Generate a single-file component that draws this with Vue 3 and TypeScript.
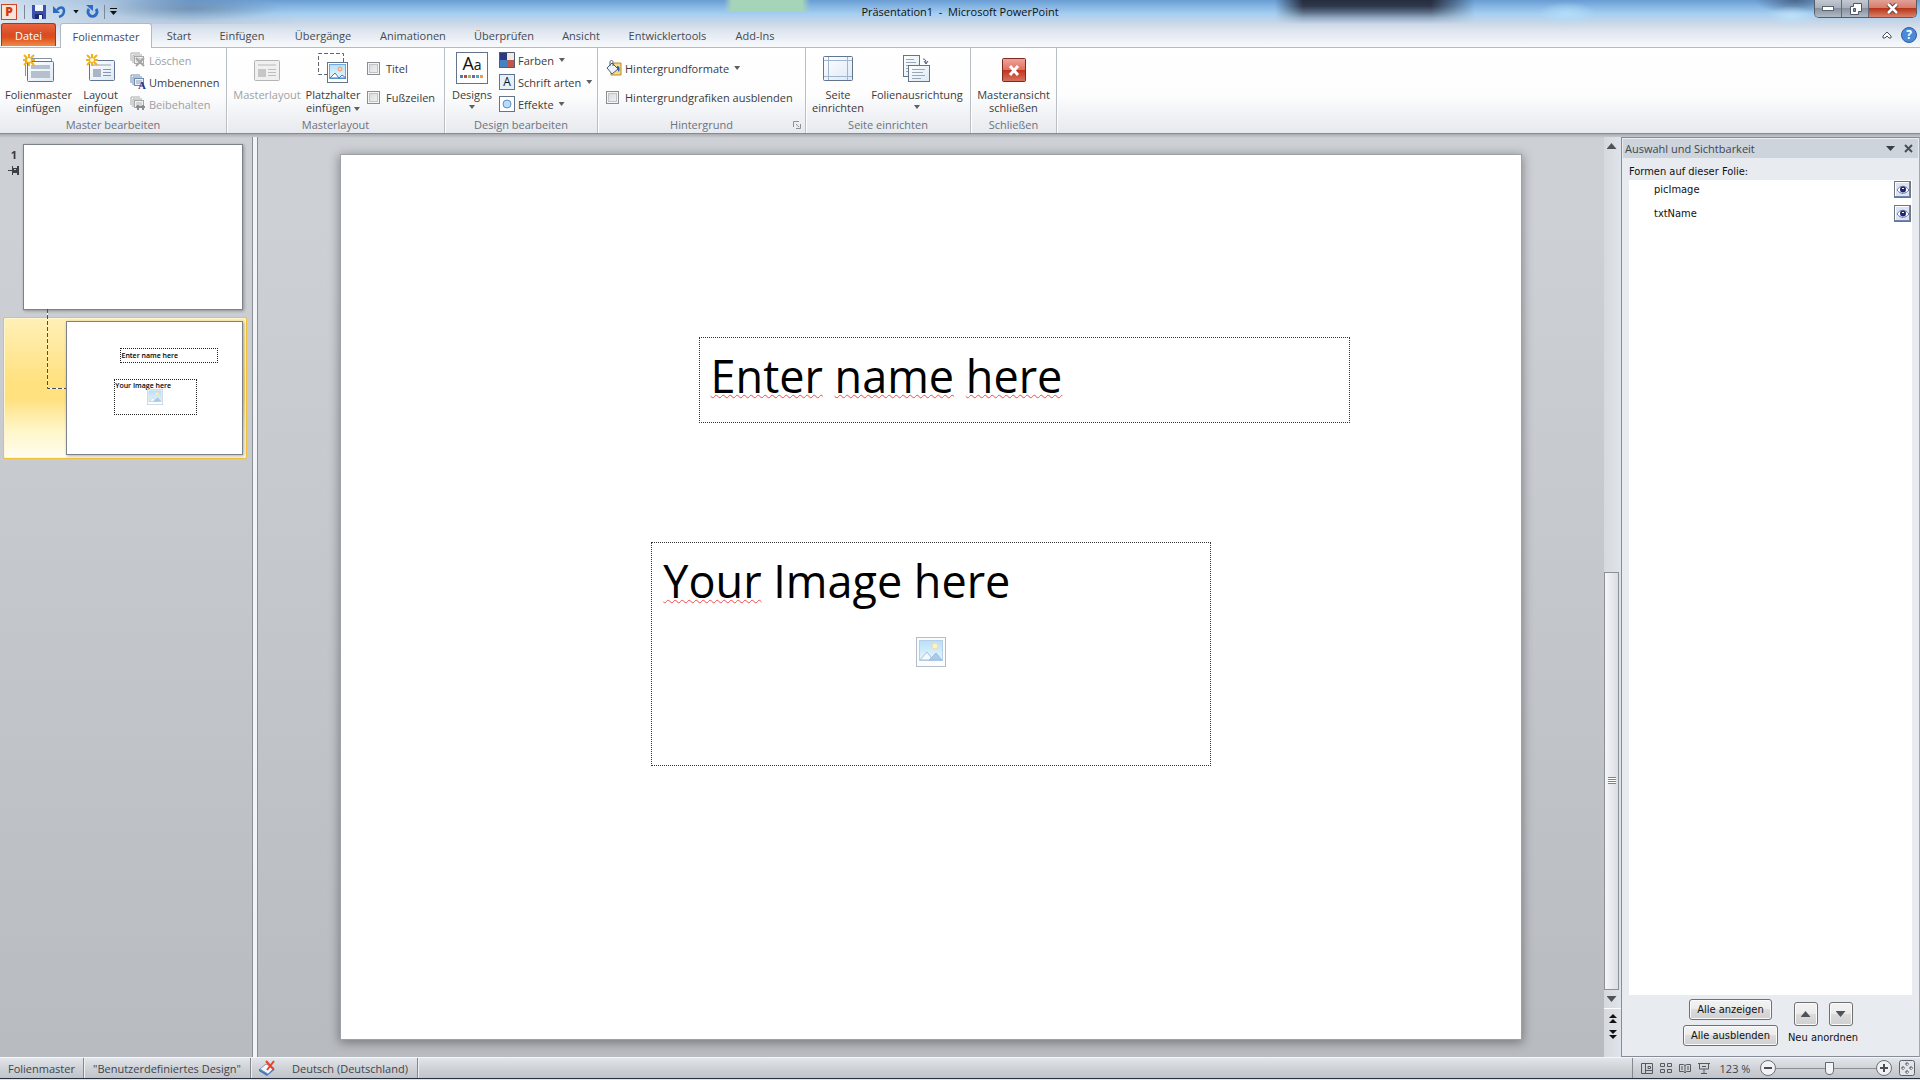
<script setup lang="ts">
import { ref } from 'vue'

interface Shape {
  name: string
  visible: boolean
}

const tabs: string[] = [
  'Start',
  'Einfügen',
  'Übergänge',
  'Animationen',
  'Überprüfen',
  'Ansicht',
  'Entwicklertools',
  'Add-Ins',
]
const shapes = ref<Shape[]>([
  { name: 'picImage', visible: true },
  { name: 'txtName', visible: true },
])
const showTitle = ref(false)
const showFooters = ref(false)
const hideGraphics = ref(false)
const zoom = ref(123)

function setAll(visible: boolean) {
  shapes.value.forEach((s) => (s.visible = visible))
}
function reorder() {
  shapes.value.reverse()
}
</script>

<template>
  <div class="app">
    <svg class="defs" width="0" height="0" aria-hidden="true">
      <defs>
        <linearGradient id="paper" x1="0" y1="0" x2="1" y2="1">
          <stop offset="0" stop-color="#ffffff" />
          <stop offset="1" stop-color="#dce9f5" />
        </linearGradient>
        <linearGradient id="sky" x1="0" y1="0" x2="0" y2="1">
          <stop offset="0" stop-color="#b8e0f8" />
          <stop offset="1" stop-color="#e8f6fd" />
        </linearGradient>
        <linearGradient id="red" x1="0" y1="0" x2="0" y2="1">
          <stop offset="0" stop-color="#f0a59b" />
          <stop offset="0.5" stop-color="#df6f60" />
          <stop offset="0.5" stop-color="#c4301a" />
          <stop offset="1" stop-color="#d87463" />
        </linearGradient>
        <symbol id="spark" viewBox="0 0 12 12">
          <path d="M6 0v12M0 6h12M1 1l10 10M11 1L1 11" stroke="#f2b01e" stroke-width="2" />
          <circle cx="6" cy="6" r="2" fill="#fffbe0" />
        </symbol>
        <symbol id="slides" viewBox="0 0 15 15">
          <path d="M1 9V1h9M3 11V3h9" fill="none" stroke="currentColor" />
          <rect x="4.500" y="4.500" width="9" height="7" fill="#eef1f5" stroke="currentColor" />
          <path d="M6 6h6v4H6z" fill="currentColor" opacity="0.4" />
        </symbol>
        <symbol id="picture" viewBox="0 0 30 30">
          <rect x="0.500" y="0.500" width="29" height="29" fill="#fbfcfe" stroke="#b4bcc8" />
          <rect x="3.500" y="3.500" width="23" height="20" fill="url(#sky)" stroke="#b5cfe8" />
          <circle cx="19" cy="9" r="3" fill="#fdf0cc" stroke="#f1dba4" />
          <path d="M4 23l7-8 6 8z" fill="#f4f9fd" stroke="#a9c3de" />
          <path d="M13 23l7-7 6 7z" fill="#a8cbe8" stroke="#9fbedb" />
        </symbol>
      </defs>
    </svg>

    <header class="chrome">
      <div class="titlebar">
        <div class="quick">
          <span class="logo">P</span>
          <i class="qsep"></i>
          <button class="bare" aria-label="Speichern">
            <svg width="14" height="14" viewBox="0 0 14 14">
              <path d="M0 0h14v14H1L0 13z" fill="#3a4fae" />
              <path d="M3 0h8v6H3z" fill="#eef3fc" />
              <path d="M3 9h8v5H3z" fill="#1d2a6c" />
              <path d="M7 10h3v4H7z" fill="#f4f6fb" />
            </svg>
          </button>
          <button class="bare" aria-label="Rückgängig">
            <svg width="13" height="13" viewBox="0 0 13 13">
              <path d="M4 5c3-4 7-3 7 1 0 3-2 5-5 6" fill="none" stroke="#2a6cc2" stroke-width="2.500" />
              <path d="M0 1v7h7z" fill="#2a6cc2" />
            </svg>
          </button>
          <i class="tri dark"></i>
          <button class="bare" aria-label="Wiederholen">
            <svg width="13" height="13" viewBox="0 0 13 13">
              <path d="M3 4a4.500 4.500 0 1 0 7 0" fill="none" stroke="#2a6cc2" stroke-width="3" />
              <path d="M0 0h7v6z" fill="#2a6cc2" />
            </svg>
          </button>
          <i class="qsep"></i>
          <button class="bare" aria-label="Symbolleiste anpassen">
            <svg width="7" height="7" viewBox="0 0 7 7"><path d="M0 0h7v1H0zM0 3h7L3.500 7z" fill="#111" /></svg>
          </button>
        </div>
        <h1 class="title">Präsentation1&nbsp; -&nbsp; Microsoft PowerPoint</h1>
        <div class="winbtns">
          <button aria-label="Minimieren">
            <svg width="12" height="6"><rect x="0.500" y="0.500" width="11" height="4" fill="#fff" stroke="#5c6470" /></svg>
          </button>
          <button aria-label="Wiederherstellen">
            <svg width="13" height="13">
              <path d="M4.500 1.500h8v8h-3v3h-8v-8h3z" fill="#fff" stroke="#4f5866" />
              <path d="M4.500 6.500h2v3h-2z" fill="#8b95a3" stroke="#4f5866" />
            </svg>
          </button>
          <button class="close" aria-label="Schließen">
            <svg width="13" height="11" viewBox="0 0 13 11">
              <path d="M2 1l9 9M11 1L2 10" stroke="#5d4444" stroke-width="4.500" />
              <path d="M2 1l9 9M11 1L2 10" stroke="#fff" stroke-width="2.500" />
            </svg>
          </button>
        </div>
      </div>
      <nav class="tabs">
        <button class="file">Datei</button>
        <button class="tab active">Folienmaster</button>
        <button v-for="t in tabs" :key="t" class="tab">{{ t }}</button>
        <div class="tabtools">
          <button class="bare" aria-label="Menüband minimieren">
            <svg width="10" height="8" viewBox="0 0 10 8">
              <path d="M1 5l4-4 4 4v2H7L5 5 3 7H1z" fill="#fff" stroke="#46505e" />
            </svg>
          </button>
          <button class="help" aria-label="Hilfe">?</button>
        </div>
      </nav>
    </header>

    <section class="ribbon">
      <div class="group g1">
        <div class="controls">
          <button class="big">
            <span class="pic">
              <svg width="32" height="30" viewBox="0 0 32 30">
                <path d="M2.500 23V5.500h26V8" fill="none" stroke="#8593a8" />
                <rect x="4.500" y="8.500" width="26" height="20" rx="1" fill="url(#paper)" stroke="#62748e" />
                <path d="M8 12h19v4H8zM8 18h19v7H8z" fill="#b5bfce" />
                <use href="#spark" x="0" y="1" width="12" height="12" />
              </svg>
            </span>
            Folienmaster<br />einfügen
          </button>
          <button class="big">
            <span class="pic">
              <svg width="32" height="30" viewBox="0 0 32 30">
                <rect x="4.500" y="7.500" width="25" height="20" rx="1" fill="url(#paper)" stroke="#62748e" />
                <path d="M8 11h18v2H8z" fill="#c3cbd6" />
                <path d="M8 16h8v8H8z" fill="#a9b5c5" />
                <path d="M18 16.500h8M18 19.500h8M18 22.500h8" stroke="#8796ab" />
                <use href="#spark" x="1" y="1" width="12" height="12" />
              </svg>
            </span>
            Layout<br />einfügen
          </button>
          <div class="rows">
            <button class="small" disabled>
              <span class="ico"><svg width="15" height="15" viewBox="0 0 15 15"><use href="#slides" /><path d="M6 6l8 8M14 6l-8 8" stroke="#a5a5a5" stroke-width="2" /></svg></span>Löschen
            </button>
            <button class="small">
              <span class="ico blue"><svg width="15" height="15" viewBox="0 0 15 15"><use href="#slides" /></svg><b class="corner">A</b></span>Umbenennen
            </button>
            <button class="small" disabled>
              <span class="ico"><svg width="15" height="15" viewBox="0 0 15 15"><use href="#slides" /><path d="M6 11h9M8 9v5M13 9v5" stroke="#8c8c8c" stroke-width="2" /></svg></span>Beibehalten
            </button>
          </div>
        </div>
        <div class="caption">Master bearbeiten</div>
      </div>

      <div class="group g2">
        <div class="controls">
          <button class="big" disabled>
            <span class="pic">
              <svg width="32" height="30" viewBox="0 0 32 30">
                <rect x="3.500" y="7.500" width="25" height="20" rx="1" fill="#f0f0f0" stroke="#b4b4b4" />
                <path d="M7 11h18v2H7z" fill="#d4d4d4" />
                <path d="M7 16h8v8H7z" fill="#c6c6c6" />
                <path d="M17 16.500h8M17 19.500h8M17 22.500h8" stroke="#bdbdbd" />
              </svg>
            </span>
            Masterlayout
          </button>
          <button class="big">
            <span class="pic">
              <svg width="32" height="32" viewBox="0 0 32 32">
                <path d="M11 22.500H1.500v-21h25V10" fill="none" stroke="#5f6670" stroke-dasharray="4 2" />
                <rect x="10.500" y="10.500" width="20" height="20" fill="#fff" stroke="#62748e" />
                <rect x="12.500" y="12.500" width="16" height="14" fill="url(#sky)" stroke="#6fa8dc" />
                <circle cx="23" cy="17" r="2" fill="#fbd7b8" stroke="#ef9a6a" />
                <path d="M13 26l5-5 4 5 3-3 4 3z" fill="#fff" stroke="#3f7cb8" />
              </svg>
            </span>
            Platzhalter<br />einfügen <i class="tri"></i>
          </button>
          <div class="rows two">
            <label class="small"><input v-model="showTitle" type="checkbox" />Titel</label>
            <label class="small"><input v-model="showFooters" type="checkbox" />Fußzeilen</label>
          </div>
        </div>
        <div class="caption">Masterlayout</div>
      </div>

      <div class="group g3">
        <div class="controls">
          <button class="big">
            <span class="pic">
              <span class="aa">
                <span>A<small>a</small></span>
                <svg width="24" height="3"><path d="M0 0h3v3H0z" fill="#4a7ebb" /><path d="M4 0h3v3H4z" fill="#be4b48" /><path d="M8 0h3v3H8z" fill="#98b954" /><path d="M12 0h3v3h-3z" fill="#7d60a0" /><path d="M16 0h3v3h-3z" fill="#46aac5" /><path d="M20 0h3v3h-3z" fill="#f79646" /></svg>
              </span>
            </span>
            Designs<i class="tri below"></i>
          </button>
          <div class="rows">
            <button class="small">
              <span class="ico"><svg width="16" height="16"><path d="M0 0h8v8H0z" fill="#2b3a80" /><path d="M8 0h8v8H8z" fill="#efeae2" /><path d="M0 8h8v8H0z" fill="#4a7fc0" /><path d="M8 8h8v8H8z" fill="#c2564a" /><path d="M.5.5h15v15H.5z" fill="none" stroke="#4e5c78" /></svg></span>Farben<i class="tri"></i>
            </button>
            <button class="small"><span class="ico boxed">A</span>Schrift arten<i class="tri"></i></button>
            <button class="small">
              <span class="ico"><svg width="16" height="16"><rect x="0.500" y="0.500" width="15" height="15" fill="#fff" stroke="#62748e" /><circle cx="8" cy="8" r="4" fill="#b8dcf6" stroke="#5a8fca" /></svg></span>Effekte<i class="tri"></i>
            </button>
          </div>
        </div>
        <div class="caption">Design bearbeiten</div>
      </div>

      <div class="group g4">
        <div class="controls">
          <div class="rows two">
            <button class="small">
              <span class="ico"><svg width="16" height="16" viewBox="0 0 16 16">
                <path d="M8 3h7v12H5v-3z" fill="#f7d987" stroke="#b88a2e" />
                <path d="M6 3l6 6-6 5-5-6z" fill="#eef5fc" stroke="#4a5a78" />
                <path d="M4 6V2c0-2 3-2 3 0v4" fill="none" stroke="#4a5a78" />
                <path d="M11 6c3 0 3 3 2 6l-2-3z" fill="#2d5fa8" />
              </svg></span>Hintergrundformate<i class="tri"></i>
            </button>
            <label class="small"><input v-model="hideGraphics" type="checkbox" />Hintergrundgrafiken ausblenden</label>
          </div>
        </div>
        <div class="caption">
          Hintergrund
          <button class="bare launcher" aria-label="Hintergrund formatieren">
            <svg width="8" height="8" viewBox="0 0 8 8"><path d="M.5 6V.5H6M3 3l3 3M7.500 3v4.500H3" fill="none" stroke="#8a9099" /></svg>
          </button>
        </div>
      </div>

      <div class="group g5">
        <div class="controls">
          <button class="big">
            <span class="pic">
              <svg width="32" height="30" viewBox="0 0 32 30">
                <rect x="1.500" y="3.500" width="29" height="24" rx="1" fill="url(#paper)" stroke="#62748e" />
                <path d="M6.500 4v23M25.500 4v23M2 7.500h28M2 23.500h28" stroke="#9fb6d2" />
              </svg>
            </span>
            Seite<br />einrichten
          </button>
          <button class="big">
            <span class="pic">
              <svg width="32" height="30" viewBox="0 0 32 30">
                <rect x="2.500" y="2.500" width="16" height="21" fill="url(#paper)" stroke="#62748e" />
                <path d="M5 6.500h8M5 9.500h10M5 12.500h6M5 15.500h3M5 18.500h3" stroke="#9aa7b8" />
                <rect x="7.500" y="12.500" width="21" height="16" fill="url(#paper)" stroke="#62748e" />
                <path d="M11 16.500h13M11 19.500h11M11 22.500h13M11 25.500h9" stroke="#9aa7b8" />
                <path d="M22 6c2 0 3 1 3 4M23 8l2 3 2-3" fill="none" stroke="#46587a" />
              </svg>
            </span>
            Folienausrichtung<i class="tri below"></i>
          </button>
        </div>
        <div class="caption">Seite einrichten</div>
      </div>

      <div class="group g6">
        <div class="controls">
          <button class="big">
            <span class="pic low">
              <svg width="24" height="24" viewBox="0 0 24 24">
                <rect x="0.500" y="0.500" width="23" height="23" rx="1" fill="url(#red)" stroke="#7d2a20" />
                <path d="M8 8l8 9M16 8l-8 9" stroke="#fff" stroke-width="3" />
              </svg>
            </span>
            Masteransicht<br />schließen
          </button>
        </div>
        <div class="caption">Schließen</div>
      </div>
    </section>

    <main class="work">
      <aside class="thumbs">
        <div class="master">
          <div class="num">
            <b>1</b>
            <svg width="11" height="9" viewBox="0 0 11 9"><path d="M0 4h4V0h1v2h4V0h2v9H9V7H5v2H4V5H0z" fill="#3d4045" /><path d="M6 3h2v1H6z" fill="#c5c8cc" /></svg>
          </div>
          <div class="mini"></div>
        </div>
        <div class="layout">
          <svg class="link" width="22" height="81"><path d="M.5 0v79.500H22" fill="none" stroke="#fff" /><path d="M.5 0v79.500H22" fill="none" stroke="#4d4d4d" stroke-dasharray="4 2" /></svg>
          <div class="mini second">
            <div class="tiny name">Enter name here</div>
            <div class="tiny image">Your Image here
              <svg width="16" height="16" viewBox="0 0 30 30"><use href="#picture" /></svg>
            </div>
          </div>
        </div>
      </aside>
      <div class="splitter"></div>
      <section class="canvas">
        <div class="slide">
          <div class="ph name"><u>Enter</u> <u>name</u> <u>here</u></div>
          <div class="ph image"><u>Your</u> Image here
            <svg width="30" height="30" viewBox="0 0 30 30"><use href="#picture" /></svg>
          </div>
        </div>
      </section>
      <div class="scroll">
        <button class="bare arrow" aria-label="Nach oben"><i class="tri up"></i></button>
        <div class="before"></div>
        <div class="thumb"><i></i></div>
        <button class="bare arrow" aria-label="Nach unten"><i class="tri big-tri"></i></button>
        <div class="jump">
          <button class="bare" aria-label="Vorherige Folie"><svg width="8" height="10"><path d="M0 4l4-4 4 4zM0 9l4-4 4 4z" fill="#111" /></svg></button>
          <button class="bare" aria-label="Nächste Folie"><svg width="8" height="10"><path d="M0 0h8L4 4zM0 5h8L4 9z" fill="#111" /></svg></button>
        </div>
      </div>
      <aside class="pane">
        <div class="panehead">
          <h2>Auswahl und Sichtbarkeit</h2>
          <button class="bare" aria-label="Optionen"><svg width="9" height="5"><path d="M0 0h9L4.500 5z" fill="#3b3f45" /></svg></button>
          <button class="bare" aria-label="Bereich schließen"><svg width="9" height="9"><path d="M1 1l7 7M8 1L1 8" stroke="#4b4f55" stroke-width="2" /></svg></button>
        </div>
        <p class="lead">Formen auf dieser Folie:</p>
        <ul class="list">
          <li v-for="s in shapes" :key="s.name">
            <span>{{ s.name }}</span>
            <button class="eye" :aria-label="s.name" @click="s.visible = !s.visible">
              <svg v-if="s.visible" width="12" height="9" viewBox="0 0 12 9">
                <path d="M0 5c3-5 8-5 12 0-3 4-8 5-12 0z" fill="#fff" stroke="#6d76a0" />
                <circle cx="6" cy="4.500" r="3" fill="#23247a" />
                <path d="M5 3h2v1H5z" fill="#fff" />
              </svg>
            </button>
          </li>
        </ul>
        <div class="panefoot">
          <div class="col">
            <button class="push" @click="setAll(true)">Alle anzeigen</button>
            <button class="push" @click="setAll(false)">Alle ausblenden</button>
          </div>
          <div class="col order">
            <div class="pair">
              <button class="push sq" aria-label="Nach vorne" @click="reorder"><i class="tri up"></i></button>
              <button class="push sq" aria-label="Nach hinten" @click="reorder"><i class="tri big-tri"></i></button>
            </div>
            <span>Neu anordnen</span>
          </div>
        </div>
      </aside>
    </main>

    <footer class="status">
      <span class="cell c1">Folienmaster</span>
      <span class="cell c2">"Benutzerdefiniertes Design"</span>
      <span class="cell c3">
        <svg width="17" height="16" viewBox="0 0 17 16">
          <path d="M0 9v2l8 5 7-6V8z" fill="#3f77c0" />
          <path d="M1 9l6-5 8 4-6 6z" fill="#f3f6fb" stroke="#8797b0" />
          <path d="M7 1l8 9M15 1l-7 9" stroke="#e8432a" stroke-width="2" />
        </svg>
        Deutsch (Deutschland)
      </span>
      <div class="views">
        <button class="bare" aria-label="Normal"><svg width="12" height="11"><path d="M.5.5h11v10H.5zM4.500 1v9M7 3.500h2.500v2H7zM5 7.500h6" fill="none" stroke="#565a60" /></svg></button>
        <button class="bare" aria-label="Foliensortierung"><svg width="12" height="11"><path d="M.5.5h4v3h-4zM7.500.5h4v3h-4zM.5 6.500h4v3h-4zM7.500 6.500h4v3h-4z" fill="none" stroke="#565a60" /></svg></button>
        <button class="bare" aria-label="Leseansicht"><svg width="12" height="11"><path d="M.5 1.500h4l1.500 1 1.500-1h4v7h-4L6 10 4.500 8.500h-4zM6 2v7M2 4h2M2 6h2M8 4h2M8 6h2" fill="none" stroke="#565a60" /></svg></button>
        <button class="bare" aria-label="Bildschirmpräsentation"><svg width="12" height="11"><path d="M0 .5h12M1.500 1v5h9V1M6 6v4M3 10.500h6M4 3.500h4" fill="none" stroke="#565a60" /></svg></button>
        <span class="pct">{{ zoom }} %</span>
        <button class="round" aria-label="Verkleinern" @click="zoom -= 10"><svg width="8" height="8"><path d="M0 4h8" stroke="#4b4f55" stroke-width="2" /></svg></button>
        <input v-model.number="zoom" class="range" type="range" min="10" max="220" aria-label="Zoom" />
        <button class="round" aria-label="Vergrößern" @click="zoom += 10"><svg width="8" height="8"><path d="M0 4h8M4 0v8" stroke="#4b4f55" stroke-width="2" /></svg></button>
        <button class="bare" aria-label="An Fenster anpassen"><svg width="16" height="16"><rect x="0.500" y="0.500" width="15" height="15" rx="2" fill="#e2e5e9" stroke="#5d6168" /><path d="M8 2v4M6 4h4M8 10v4M6 12h4M2 8h4M4 6v4M10 8h4M12 6v4" stroke="#4b4f55" stroke-dasharray="2 1" /></svg></button>
      </div>
    </footer>
    <div class="edge"></div>
  </div>
</template>

<style>
body {
  margin: 0;
}
</style>

<style scoped>
.app,
.app * {
  box-sizing: border-box;
}
.app {
  display: flex;
  flex-direction: column;
  min-height: 100vh;
  font: 11px/13px 'Open Sans', 'Noto Sans', sans-serif;
  color: #3b3b3b;
  background: #c4c7cb;
}
.defs {
  position: absolute;
}
button {
  font: inherit;
  color: inherit;
  padding: 0;
  margin: 0;
  background: none;
  border: 0;
}
svg {
  display: block;
  flex: none;
}
h1,
h2,
p,
ul {
  margin: 0;
  padding: 0;
  font: inherit;
  list-style: none;
}
.bare {
  display: flex;
  align-items: center;
  justify-content: center;
}
.tri {
  display: inline-block;
  width: 6px;
  height: 4px;
  background: #5f5f5f;
  clip-path: polygon(0 0, 100% 0, 50% 100%);
}
.tri.dark {
  background: #111;
}
.tri.up,
.tri.big-tri {
  width: 10px;
  height: 6px;
  background: #4f535a;
}
.tri.up {
  clip-path: polygon(50% 0, 100% 100%, 0 100%);
}

/* window chrome */
.chrome {
  position: relative;
  z-index: 0;
  border-bottom: 1px solid #b3b9c1;
  background:
    radial-gradient(ellipse 30px 12px at 1567px 14px, rgba(180, 222, 250, 0.9), rgba(180, 222, 250, 0)),
    radial-gradient(ellipse 24px 10px at 1792px 16px, rgba(190, 226, 250, 0.9), rgba(190, 226, 250, 0)),
    radial-gradient(ellipse 40px 14px at 1795px 0, rgba(60, 80, 108, 0.7), rgba(60, 80, 108, 0)),
    linear-gradient(90deg, rgba(166, 212, 184, 0) 724px, #a6d4b8 732px, #a6d4b8 802px, rgba(166, 212, 184, 0) 810px) 0 0 / 100% 12px no-repeat,
    radial-gradient(ellipse 90px 12px at 190px 9px, rgba(78, 96, 122, 0.4), rgba(78, 96, 122, 0)),
    linear-gradient(90deg, rgba(222, 233, 244, 0.85), rgba(190, 205, 222, 0.7) 110px, rgba(120, 150, 185, 0.2) 190px, rgba(255, 255, 255, 0) 300px) 0 0 / 100% 24px no-repeat,
    linear-gradient(#699dd3 0, #7fb0e0 5px, #a6cff0 14px, #bdd4e9 20px, #cfdae8 25px, #e0e7f0 32px, #f2f5f9 43px, #f7f9fb 100%);
}
/* dark window showing through the glass */
.chrome::before {
  content: '';
  position: absolute;
  z-index: -1;
  left: 1275px;
  top: 0;
  width: 200px;
  height: 24px;
  background: linear-gradient(#242c3e, #2f384b 6px, rgba(70, 82, 102, 0.8) 12px, rgba(120, 134, 154, 0.5) 18px, rgba(190, 203, 220, 0));
  mask-image: linear-gradient(90deg, transparent, #000 14%, #000 78%, transparent);
}
.titlebar {
  display: grid;
  grid-template-columns: 1fr auto 1fr;
  height: 23px;
}
.quick {
  display: flex;
  align-items: center;
  gap: 7px;
  padding-left: 1px;
}
.logo {
  width: 16px;
  height: 16px;
  border: 1px solid #d0451f;
  background: #fbe3d6;
  color: #cf3a12;
  font-weight: 800;
  font-size: 12px;
  line-height: 14px;
  text-align: center;
}
.qsep {
  width: 1px;
  height: 14px;
  margin: 0 -2px;
  background: #7d8796;
}
.logo + .qsep {
  margin: 0;
}
.title {
  font-size: 11px;
  line-height: 23px;
  color: #111;
}
.winbtns {
  display: flex;
  justify-self: end;
  height: 18px;
  margin-right: 3px;
  border: 1px solid #555c68;
  border-top: 0;
  border-radius: 0 0 5px 5px;
  overflow: hidden;
}
.winbtns button {
  display: flex;
  align-items: center;
  justify-content: center;
  width: 27px;
  background: linear-gradient(#c3c9d2, #a7aeb9 50%, #8791a0 50%, #b3bac4);
  border-right: 1px solid #626975;
}
.winbtns .close {
  width: 47px;
  border: 0;
  background: linear-gradient(#e2a196, #d4796a 50%, #b83618 50%, #d9826a);
}
.tabs {
  display: grid;
  grid-template-columns: 56px 98px 50px 76px 86px 94px 88px 66px 107px 68px 1fr;
  height: 24px;
}
.tab {
  color: #444a52;
  height: 24px;
}
.tab.active {
  margin: 0 2px -1px 4px;
  height: 25px;
  background: #fff;
  border: 1px solid #b3b9c1;
  border-bottom: 0;
  border-radius: 3px 3px 0 0;
}
.file {
  margin-left: 1px;
  height: 23px;
  color: #fff;
  border: 1px solid #a93712;
  border-bottom: 0;
  border-radius: 3px 3px 0 0;
  background: linear-gradient(#e8663f, #d94a21 50%, #dc4d1e 60%, #f08a45);
}
.tabtools {
  display: flex;
  justify-content: flex-end;
  align-items: center;
  gap: 9px;
  padding-right: 3px;
}
.help {
  width: 16px;
  height: 16px;
  border: 1px solid #2b5fa8;
  border-radius: 50%;
  background: #4a8ad6;
  color: #fff;
  font-weight: 700;
  font-size: 12px;
  line-height: 14px;
}

/* ribbon */
.ribbon {
  display: flex;
  height: 86px;
  background: linear-gradient(#fff, #fdfdfe 55%, #e6e9ee);
  border-bottom: 1px solid #878b91;
}
.group {
  display: flex;
  flex-direction: column;
  border-right: 1px solid #b9bdc4;
  box-shadow: 1px 0 #fff;
}
.g1 {
  width: 227px;
}
.g2 {
  width: 218px;
}
.g3 {
  width: 153px;
}
.g4 {
  width: 208px;
}
.g5 {
  width: 165px;
}
.g6 {
  width: 86px;
}
.controls {
  display: grid;
  height: 68px;
  padding-top: 2px;
}
.g1 .controls {
  grid-template-columns: 75px 49px 1fr;
  padding-left: 1px;
}
.g2 .controls {
  grid-template-columns: 72px 60px 1fr;
  padding-left: 4px;
}
.g3 .controls {
  grid-template-columns: 48px 1fr;
  padding-left: 3px;
}
.g5 .controls {
  grid-template-columns: 64px 94px;
}
.big {
  display: block;
  text-align: center;
  white-space: nowrap;
}
.big,
.small {
  align-self: start;
}
.pic {
  display: flex;
  align-items: center;
  justify-content: center;
  height: 36px;
  margin-bottom: 2px;
}
.pic.low {
  padding-top: 4px;
}
.tri.below {
  display: block;
  margin: 4px auto 0;
}
.big .tri {
  vertical-align: middle;
}
button:disabled {
  color: #a0a0a0;
}
.rows {
  display: flex;
  flex-direction: column;
  padding-left: 5px;
  margin-top: -1px;
}
.g3 .rows {
  padding-left: 3px;
}
.rows.two {
  padding: 8px 0 0 4px;
  gap: 7px;
}
.g4 .rows.two {
  padding-left: 8px;
}
.small {
  display: flex;
  align-items: center;
  gap: 3px;
  height: 22px;
  white-space: nowrap;
}
.two .small input {
  margin-right: 3px;
}
.small .tri {
  margin-left: 2px;
}
.ico {
  position: relative;
  width: 16px;
  height: 16px;
  color: #a8a8a8;
}
.ico.blue {
  color: #6d8bb0;
}
.corner {
  position: absolute;
  right: 0;
  bottom: 0;
  font: 700 11px/10px 'Liberation Serif', serif;
  color: #1e3a8a;
}
.boxed {
  border: 1px solid #62748e;
  background: #e6f0fa;
  color: #111;
  font-size: 12px;
  line-height: 14px;
  text-align: center;
}
.aa {
  display: flex;
  flex-direction: column;
  align-items: center;
  justify-content: flex-end;
  width: 32px;
  height: 32px;
  padding-bottom: 5px;
  border: 1px solid #62748e;
  background: #fff;
  color: #111;
  font-size: 18px;
  line-height: 20px;
}
.aa small {
  font-size: 14px;
}
input[type='checkbox'] {
  appearance: none;
  width: 13px;
  height: 13px;
  margin: 0;
  border: 1px solid #8a8d91;
  background: linear-gradient(135deg, #d5d7da, #f4f4f4);
  box-shadow: inset 0 0 0 1px #f5f5f5, inset 0 0 0 2px #c0c3c7;
}
input[type='checkbox']:checked {
  background: #4a6ea8;
}
.caption {
  position: relative;
  text-align: center;
  color: #6b7380;
  line-height: 17px;
}
.launcher {
  position: absolute;
  right: 4px;
  top: 5px;
}

/* workspace */
.work {
  display: flex;
  flex: 1;
  padding-top: 3px;
  background: linear-gradient(#a9adb2 0, #cdd0d5 4px, #cdd0d5 10%, #b8bbc0 100%);
}
.thumbs {
  width: 252px;
  padding: 7px 5px 0 3px;
}
.master {
  display: flex;
  gap: 4px;
  padding-right: 4px;
}
.num {
  display: flex;
  flex-direction: column;
  align-items: flex-end;
  gap: 5px;
  width: 16px;
  padding-top: 4px;
}
.num b {
  padding-right: 2px;
}
.mini {
  flex: 1;
  height: 166px;
  border: 1px solid #7c828b;
  background: #fff;
  box-shadow: 1px 1px 3px rgba(0, 0, 0, 0.3);
}
.layout {
  position: relative;
  height: 142px;
  margin-top: 7px;
  padding: 3px 3px 0 62px;
  border: 1px solid #f0c23c;
  border-radius: 2px;
  background: linear-gradient(#fff0b8, #ffe180 45%, #ffe180 58%, #fff6c8 80%, #fffdf0);
  box-shadow: inset 0 0 0 1px #fff6d0;
}
.link {
  position: absolute;
  left: 43px;
  top: -9px;
}
.mini.second {
  position: relative;
  height: 134px;
}
.tiny {
  position: absolute;
  border: 1px dotted #222;
  color: #000;
  font: 600 7px/9px 'Open Sans', sans-serif;
  white-space: nowrap;
}
.tiny.name {
  left: 30%;
  top: 20%;
  width: 56%;
  height: 15px;
  padding: 2px 1px;
}
.tiny.image {
  left: 27%;
  top: 43%;
  width: 47%;
  height: 36px;
  padding: 1px 0;
}
.tiny svg {
  margin: -1px auto 0;
}
.splitter {
  width: 6px;
  background: #f3f4f6;
  border: 1px solid #8a8f97;
  border-width: 0 1px;
}
.canvas {
  display: flex;
  flex: 1;
  min-width: 0;
  padding: 17px 82px;
}
.slide {
  position: relative;
  flex: 1;
  background: #fff;
  border: 1px solid #9da2a9;
  box-shadow: 0 2px 10px 1px rgba(0, 0, 0, 0.35);
}
.ph {
  position: absolute;
  border: 1px dotted #333;
  color: #000;
  font: 45px/56px 'Open Sans', sans-serif;
  white-space: nowrap;
  padding: 10px 11px;
}
.ph u {
  text-decoration: underline wavy #f04a4a 1px;
  text-decoration-skip-ink: none;
  text-underline-offset: 1px;
}
.ph.name {
  left: 30.3%;
  top: 20.6%;
  width: 55.2%;
  height: 9.7%;
}
.ph.image {
  left: 26.3%;
  top: 43.8%;
  width: 47.4%;
  height: 25.3%;
}
.ph svg {
  margin: 28px auto 0;
}
.scroll {
  display: flex;
  flex-direction: column;
  width: 17px;
  background: linear-gradient(90deg, #d6dadf, #dfe4ea);
}
.arrow {
  width: 15px;
  height: 18px;
}
.before {
  flex: 1;
}
.thumb {
  display: flex;
  flex: 1;
  align-items: center;
  justify-content: center;
  width: 15px;
  border: 1px solid #8a8f98;
  background: linear-gradient(90deg, #f5f6f9, #d9dde4);
}
.thumb i {
  width: 8px;
  height: 7px;
  background: repeating-linear-gradient(#7e838b 0 1px, #fff 1px 2px);
}
.jump {
  display: flex;
  flex-direction: column;
  align-items: center;
  gap: 6px;
  height: 49px;
  padding-top: 5px;
  border-top: 1px solid #fff;
}

/* selection pane */
.pane {
  display: flex;
  flex-direction: column;
  width: 299px;
  padding: 1px 1px 0;
  border: 1px solid #878d97;
  border-right-color: #a4a9b1;
  background: #e8ebf0;
  color: #111;
  font-family: 'DejaVu Sans Condensed', 'Open Sans', sans-serif;
}
.panehead {
  display: flex;
  align-items: center;
  gap: 9px;
  height: 19px;
  padding: 0 5px 0 2px;
  background: #cdd4db;
  color: #3f454d;
}
.panehead h2 {
  flex: 1;
  font: 11px/18px 'Open Sans', sans-serif;
}
.lead {
  padding: 7px 6px 2px;
}
.list {
  flex: 1;
  margin: 0 6px;
  background: #fff;
}
.list li {
  display: flex;
  align-items: center;
  justify-content: space-between;
  height: 18px;
  margin-bottom: 6px;
  padding: 0 1px 0 25px;
}
.eye {
  display: flex;
  align-items: center;
  justify-content: center;
  width: 17px;
  height: 17px;
  border: 1px solid #6f7582;
  background: #dbe5f2;
  box-shadow: inset -1px -1px #6c84b4, inset 1px 1px #fff;
}
.panefoot {
  display: flex;
  justify-content: center;
  gap: 10px;
  height: 61px;
  padding: 4px 0 0;
}
.col {
  display: flex;
  flex-direction: column;
  align-items: center;
  gap: 5px;
}
.order {
  padding-top: 3px;
}
.pair {
  display: flex;
  gap: 11px;
}
.push {
  height: 21px;
  padding: 0 7px;
  border: 1px solid #707070;
  border-radius: 3px;
  background: linear-gradient(#f3f3f3, #ebebeb 50%, #dcdcdc 50%, #cfcfcf);
  box-shadow: inset 0 0 0 1px #fbfbfb;
}
.push.sq {
  display: flex;
  align-items: center;
  justify-content: center;
  width: 24px;
  height: 24px;
  padding: 0;
}

/* status bar */
.status {
  display: flex;
  height: 21px;
  border-top: 1px solid #f4f5f7;
  background: linear-gradient(#e2e5e9, #cfd3d8 50%, #c0c4ca);
  color: #3f444b;
}
.cell {
  display: flex;
  align-items: center;
  border-right: 1px solid #85898f;
  box-shadow: 1px 0 #eceef0;
  white-space: nowrap;
}
.c1 {
  width: 84px;
  padding-left: 8px;
}
.c2 {
  width: 167px;
  padding-left: 9px;
}
.c3 {
  width: 167px;
  padding-left: 8px;
  gap: 16px;
}
.views {
  display: flex;
  align-items: center;
  gap: 7px;
  margin-left: auto;
  padding: 0 5px 0 8px;
  border-left: 1px solid #85898f;
}
.pct {
  width: 36px;
  text-align: center;
  white-space: nowrap;
}
.round {
  display: flex;
  align-items: center;
  justify-content: center;
  width: 16px;
  height: 16px;
  margin: 0 -7px 0 0;
  border: 1px solid #6c7077;
  border-radius: 50%;
  background: #f0f1f3;
}
.range + .round {
  margin: 0 0 0 -7px;
}
.range {
  appearance: none;
  width: 100px;
  height: 16px;
  margin: 0;
  background: linear-gradient(#8a8e95, #8a8e95) center / 100% 1px no-repeat;
}
.range::-webkit-slider-thumb {
  appearance: none;
  width: 9px;
  height: 13px;
  border: 1px solid #666a70;
  border-radius: 1px 1px 5px 5px;
  background: #f3f4f6;
}
.edge {
  height: 2px;
  background: linear-gradient(#26303c 50%, #dfe4ea 50%);
}
</style>
